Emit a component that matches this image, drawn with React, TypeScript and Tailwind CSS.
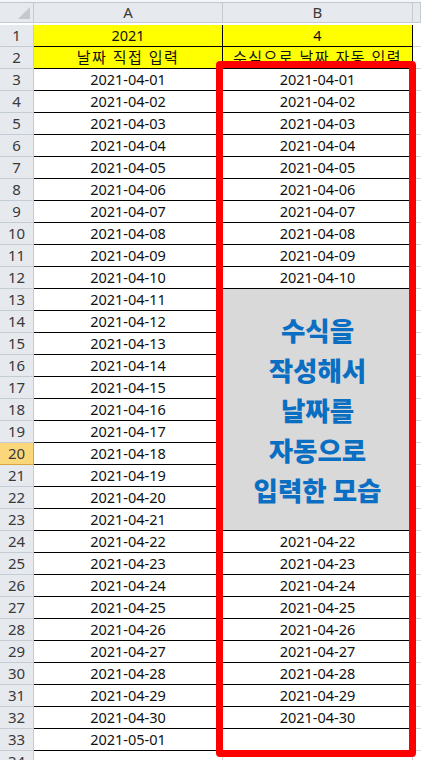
import React from "react";

const dates: string[] = [];
for (let d = 1; d <= 30; d++) dates.push(`2021-04-${String(d).padStart(2, "0")}`);
dates.push("2021-05-01");

const hdr = "border-r border-b border-[#c5cbd3] bg-[#e6e9ee] text-[#3a3a3a] flex items-center justify-center";

export default function App() {
  const rows: React.ReactNode[] = [];
  for (let r = 1; r <= 34; r++) {
    const isSel = r === 20;
    rows.push(
      <div
        key={`h${r}`}
        className={`border-r border-b flex items-center justify-center h-[22px] text-[15px] ${
          isSel ? "bg-[#fbd77c] border-[#d9a63c] text-[#3a3a3a]" : "bg-[#e6e9ee] border-[#c5cbd3] text-[#3a3a3a]"
        }`}
      >
        {r}
      </div>
    );
    let a = "";
    let b = "";
    let yellow = false;
    if (r === 1) {
      a = "2021";
      b = "4";
      yellow = true;
    } else if (r === 2) {
      a = "날짜 직접 입력";
      b = "수식으로 날짜 자동 입력";
      yellow = true;
    } else if (r <= 33) {
      a = dates[r - 3];
      const idx = r - 3;
      b = idx < 30 ? dates[idx] : "";
    }
    const kor = r === 2 ? "text-[15px] tracking-[1.5px]" : "";
    const bordered = r <= 33;
    rows.push(
      <div
        key={`a${r}`}
        className={`h-[22px] flex items-center justify-center whitespace-nowrap overflow-hidden border-r border-b ${kor} ${
          bordered ? "border-black" : "border-[#d4d4d4]"
        } ${yellow ? "bg-[#ffff00]" : "bg-white"}`}
      >
        {a}
      </div>
    );
    if (r === 13) {
      rows.push(
        <div
          key="merged"
          className="row-span-11 bg-[#d9d9d9] border-r border-b border-black flex flex-col items-center justify-center font-['Noto_Sans_CJK_KR',sans-serif] font-black text-[26.5px] leading-[40px] text-[#0a6fc2]"
        >
          <div>수식을</div>
          <div>작성해서</div>
          <div>날짜를</div>
          <div>자동으로</div>
          <div>입력한 모습</div>
        </div>
      );
    } else if (r < 13 || r > 23) {
      rows.push(
        <div
          key={`b${r}`}
          className={`h-[22px] flex items-center justify-center whitespace-nowrap overflow-hidden border-r border-b ${kor} ${
            bordered ? "border-black" : "border-[#d4d4d4]"
          } ${yellow ? "bg-[#ffff00]" : "bg-white"}`}
        >
          {b}
        </div>
      );
    }
    rows.push(<div key={`c${r}`} className="h-[22px] border-b border-[#d4d4d4] bg-white" />);
  }

  return (
    <div className="w-[421px] h-[760px] overflow-hidden bg-white relative font-['Noto_Sans','Noto_Sans_CJK_KR',sans-serif] text-[14.5px] text-[#111]">
      <div className="h-[3px] border-b border-[#c2c7cf] bg-[#f4f5f7]" />
      <div className="grid grid-cols-[34px_189px_190px_1fr] auto-rows-[22px]">
        <div className={`${hdr} h-[20px] relative`}>
          <div className="absolute right-[3px] bottom-[3px] w-0 h-0 border-l-[12px] border-l-transparent border-b-[12px] border-b-[#c4c9cf]" />
        </div>
        <div className={`${hdr} h-[20px] text-[15px]`}>A</div>
        <div className={`${hdr} h-[20px] text-[15px]`}>B</div>
        <div className={`${hdr} h-[20px]`} />
        {rows}
      </div>
      <div className="absolute left-[216px] top-[61px] w-[200px] h-[696px] border-[7px] border-[#ff0000] rounded-[4px]" />
    </div>
  );
}
